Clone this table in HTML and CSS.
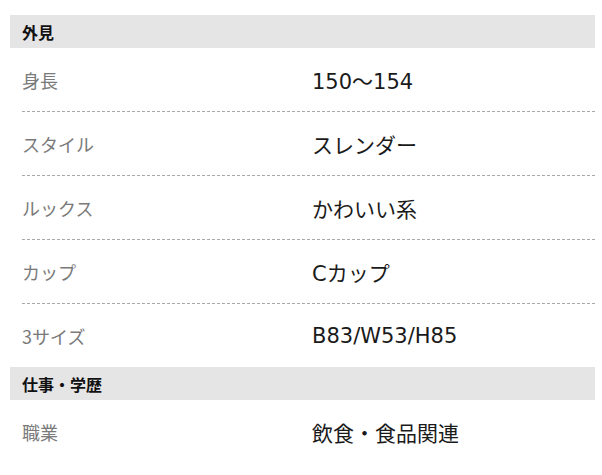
FILE: index.html
```html
<!DOCTYPE html>
<html lang="ja">
<head>
<meta charset="utf-8">
<link rel="stylesheet" href="styles.css">
</head>
<body>
<div class="profile">
  <h2 class="section-title">外見</h2>
  <dl class="rows">
    <div class="row"><dt>身長</dt><dd>150〜154</dd></div>
    <div class="row"><dt>スタイル</dt><dd>スレンダー</dd></div>
    <div class="row"><dt>ルックス</dt><dd>かわいい系</dd></div>
    <div class="row"><dt>カップ</dt><dd>Cカップ</dd></div>
    <div class="row"><dt>3サイズ</dt><dd>B83/W53/H85</dd></div>
  </dl>
  <h2 class="section-title">仕事・学歴</h2>
  <dl class="rows">
    <div class="row"><dt>職業</dt><dd>飲食・食品関連</dd></div>
  </dl>
</div>
</body>
</html>
```
FILE: styles.css
```css
html, body {
  margin: 0;
  padding: 0;
  background: #ffffff;
}
body {
  font-family: "Noto Sans CJK JP", "Noto Sans", sans-serif;
  padding: 15px 7px 0 10px;
}
.profile {
  display: flex;
  flex-direction: column;
}
.section-title {
  margin: 0;
  height: 33px;
  padding-left: 12px;
  display: flex;
  align-items: center;
  background: #e5e5e5;
  font-size: 16px;
  font-weight: 700;
  color: #111;
}
.rows {
  margin: 0 0 0 12px;
  padding: 0;
}
.row {
  display: grid;
  grid-template-columns: 290px 1fr;
  align-items: center;
  height: 63px;
  border-bottom: 1px dashed #a8a8a8;
}
.row:last-child {
  border-bottom: none;
}
.row dt {
  font-size: 18px;
  color: #7a7a7a;
}
.row dd {
  margin: 0;
  font-family: "DejaVu Sans", "Noto Sans CJK JP", sans-serif;
  font-size: 21px;
  color: #1a1a1a;
}
```
